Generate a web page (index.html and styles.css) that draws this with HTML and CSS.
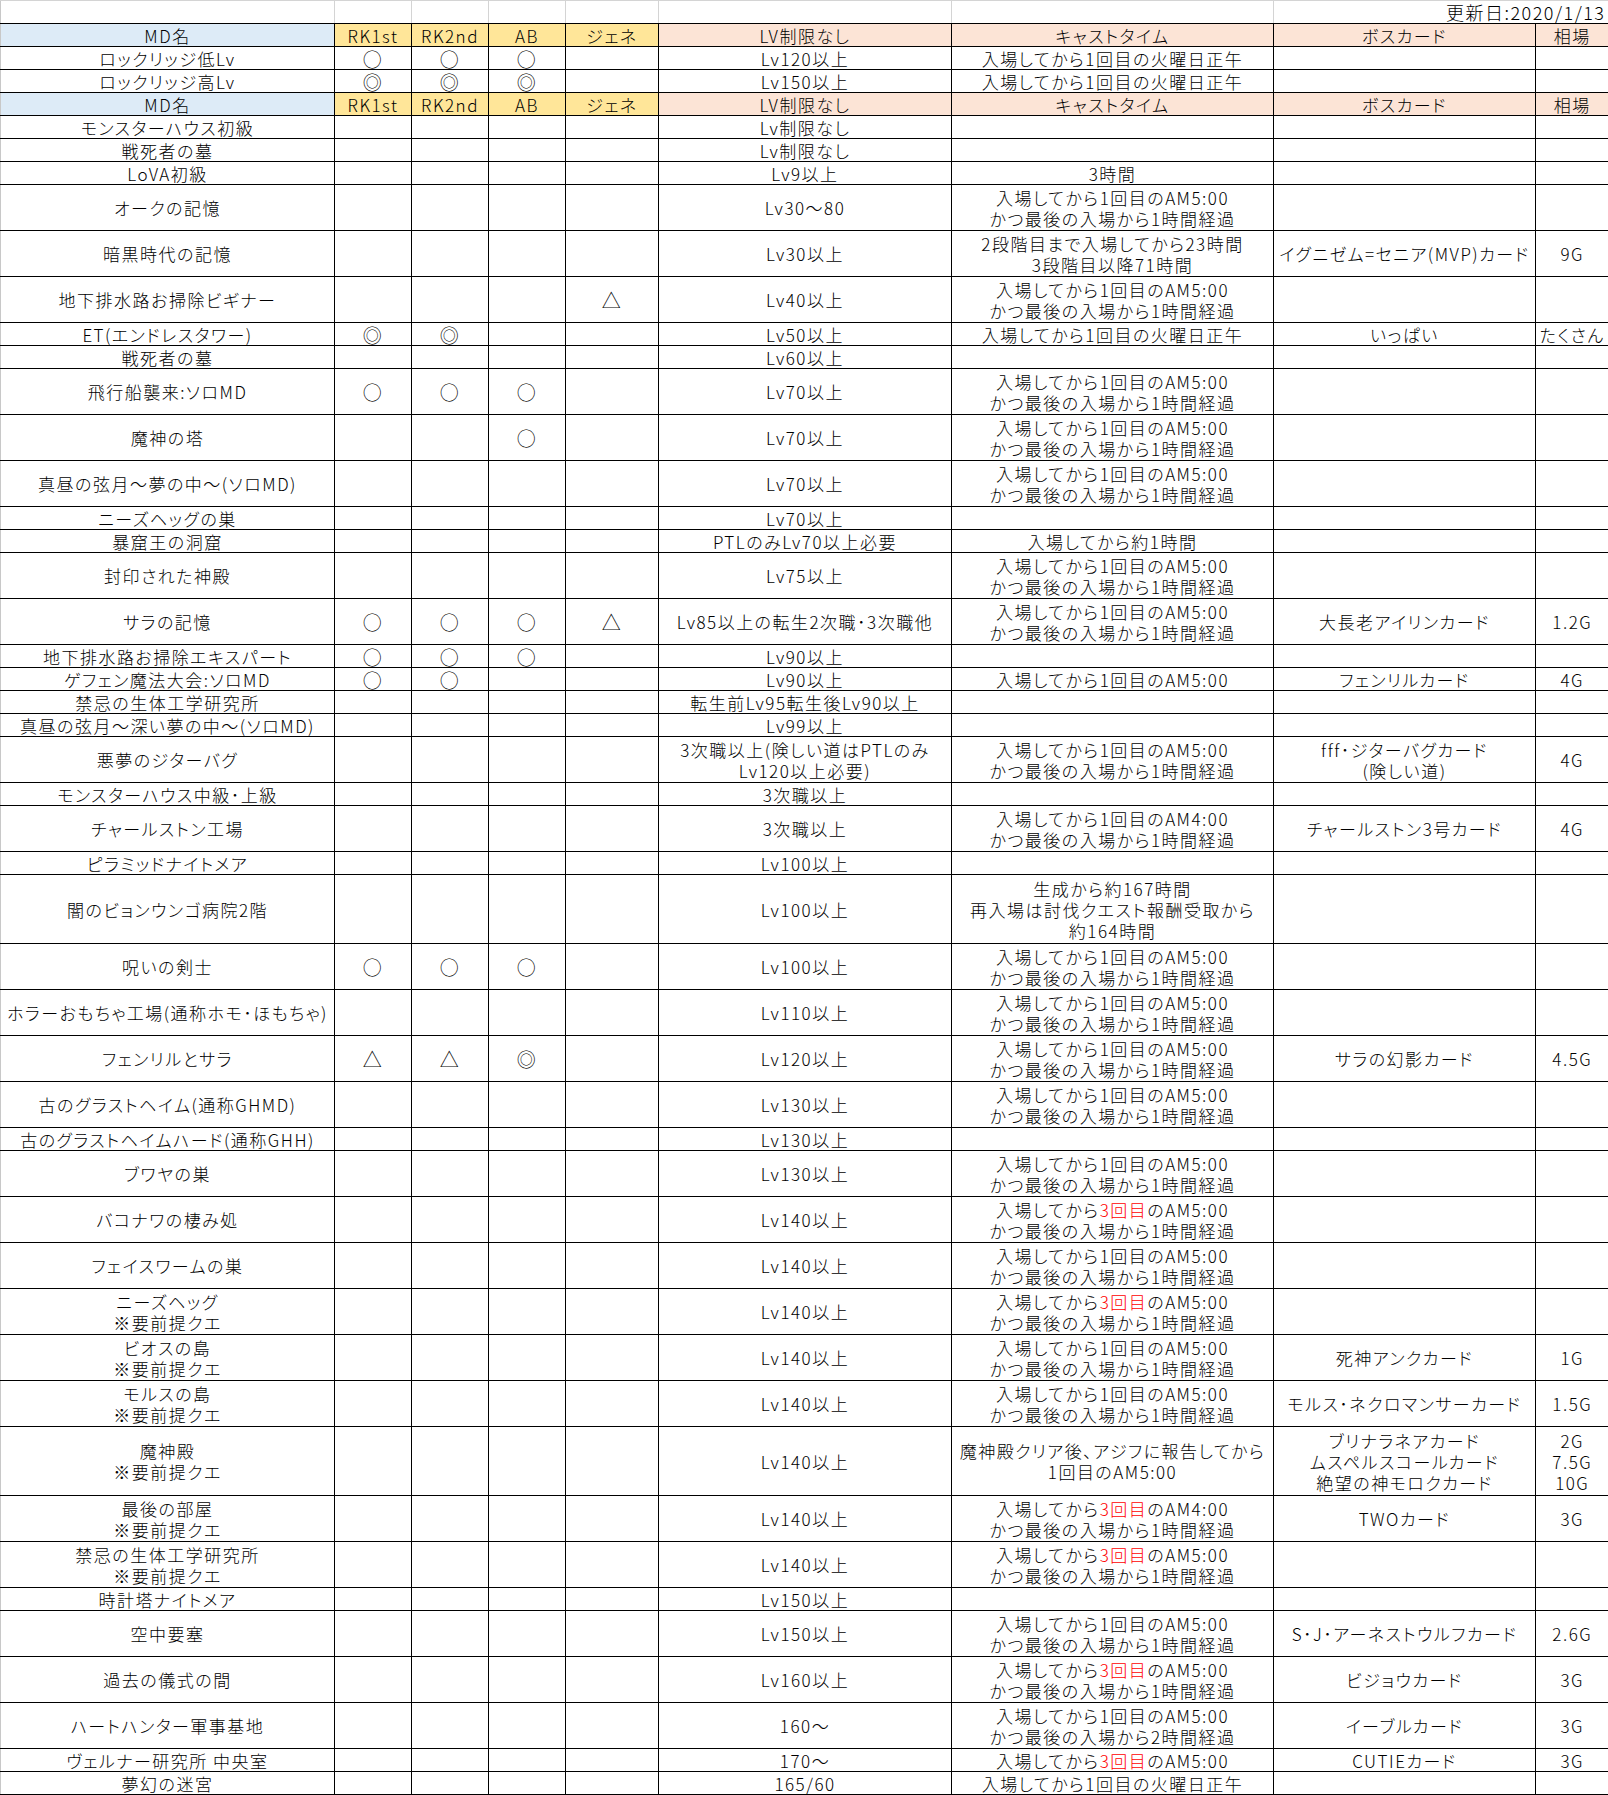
FILE: index.html
```html
<!DOCTYPE html>
<html lang="ja">
<head>
<meta charset="utf-8">
<title>MD一覧</title>
<link rel="stylesheet" href="styles.css">
</head>
<body>
<table class="sheet">
<colgroup>
<col class="c-name"><col class="c-mk"><col class="c-mk"><col class="c-mk"><col class="c-gene"><col class="c-lv"><col class="c-cast"><col class="c-boss"><col class="c-price">
</colgroup>
<tbody>
<tr class="r1 top"><td></td><td></td><td></td><td></td><td></td><td></td><td></td><td colspan="2" class="date">更新日:2020/1/13</td></tr>
<tr class="r1 head"><td class="hb">MD名</td><td class="hy">RK1st</td><td class="hy">RK2nd</td><td class="hy">AB</td><td class="hy">ジェネ</td><td class="hp">LV制限なし</td><td class="hp">キャストタイム</td><td class="hp">ボスカード</td><td class="hp">相場</td></tr>
<tr class="r1"><td>ロックリッジ低Lv</td><td class="mk">○</td><td class="mk">○</td><td class="mk">○</td><td></td><td>Lv120以上</td><td>入場してから1回目の火曜日正午</td><td></td><td></td></tr>
<tr class="r1"><td>ロックリッジ高Lv</td><td class="mk">◎</td><td class="mk">◎</td><td class="mk">◎</td><td></td><td>Lv150以上</td><td>入場してから1回目の火曜日正午</td><td></td><td></td></tr>
<tr class="r1 head"><td class="hb">MD名</td><td class="hy">RK1st</td><td class="hy">RK2nd</td><td class="hy">AB</td><td class="hy">ジェネ</td><td class="hp">LV制限なし</td><td class="hp">キャストタイム</td><td class="hp">ボスカード</td><td class="hp">相場</td></tr>
<tr class="r1"><td>モンスターハウス初級</td><td></td><td></td><td></td><td></td><td>Lv制限なし</td><td></td><td></td><td></td></tr>
<tr class="r1"><td>戦死者の墓</td><td></td><td></td><td></td><td></td><td>Lv制限なし</td><td></td><td></td><td></td></tr>
<tr class="r1"><td>LoVA初級</td><td></td><td></td><td></td><td></td><td>Lv9以上</td><td>3時間</td><td></td><td></td></tr>
<tr class="r2"><td>オークの記憶</td><td></td><td></td><td></td><td></td><td>Lv30～80</td><td>入場してから1回目のAM5:00<br>かつ最後の入場から1時間経過</td><td></td><td></td></tr>
<tr class="r2"><td>暗黒時代の記憶</td><td></td><td></td><td></td><td></td><td>Lv30以上</td><td>2段階目まで入場してから23時間<br>3段階目以降71時間</td><td>イグニゼム=セニア(MVP)カード</td><td>9G</td></tr>
<tr class="r2"><td>地下排水路お掃除ビギナー</td><td></td><td></td><td></td><td class="mk">△</td><td>Lv40以上</td><td>入場してから1回目のAM5:00<br>かつ最後の入場から1時間経過</td><td></td><td></td></tr>
<tr class="r1"><td>ET(エンドレスタワー)</td><td class="mk">◎</td><td class="mk">◎</td><td></td><td></td><td>Lv50以上</td><td>入場してから1回目の火曜日正午</td><td>いっぱい</td><td class="tight">たくさん</td></tr>
<tr class="r1"><td>戦死者の墓</td><td></td><td></td><td></td><td></td><td>Lv60以上</td><td></td><td></td><td></td></tr>
<tr class="r2"><td>飛行船襲来:ソロMD</td><td class="mk">○</td><td class="mk">○</td><td class="mk">○</td><td></td><td>Lv70以上</td><td>入場してから1回目のAM5:00<br>かつ最後の入場から1時間経過</td><td></td><td></td></tr>
<tr class="r2"><td>魔神の塔</td><td></td><td></td><td class="mk">○</td><td></td><td>Lv70以上</td><td>入場してから1回目のAM5:00<br>かつ最後の入場から1時間経過</td><td></td><td></td></tr>
<tr class="r2"><td>真昼の弦月～夢の中～(ソロMD)</td><td></td><td></td><td></td><td></td><td>Lv70以上</td><td>入場してから1回目のAM5:00<br>かつ最後の入場から1時間経過</td><td></td><td></td></tr>
<tr class="r1"><td>ニーズヘッグの巣</td><td></td><td></td><td></td><td></td><td>Lv70以上</td><td></td><td></td><td></td></tr>
<tr class="r1"><td>暴窟王の洞窟</td><td></td><td></td><td></td><td></td><td>PTLのみLv70以上必要</td><td>入場してから約1時間</td><td></td><td></td></tr>
<tr class="r2"><td>封印された神殿</td><td></td><td></td><td></td><td></td><td>Lv75以上</td><td>入場してから1回目のAM5:00<br>かつ最後の入場から1時間経過</td><td></td><td></td></tr>
<tr class="r2"><td>サラの記憶</td><td class="mk">○</td><td class="mk">○</td><td class="mk">○</td><td class="mk">△</td><td>Lv85以上の転生2次職･3次職他</td><td>入場してから1回目のAM5:00<br>かつ最後の入場から1時間経過</td><td>大長老アイリンカード</td><td>1.2G</td></tr>
<tr class="r1"><td>地下排水路お掃除エキスパート</td><td class="mk">○</td><td class="mk">○</td><td class="mk">○</td><td></td><td>Lv90以上</td><td></td><td></td><td></td></tr>
<tr class="r1"><td>ゲフェン魔法大会:ソロMD</td><td class="mk">○</td><td class="mk">○</td><td></td><td></td><td>Lv90以上</td><td>入場してから1回目のAM5:00</td><td>フェンリルカード</td><td>4G</td></tr>
<tr class="r1"><td>禁忌の生体工学研究所</td><td></td><td></td><td></td><td></td><td>転生前Lv95転生後Lv90以上</td><td></td><td></td><td></td></tr>
<tr class="r1"><td>真昼の弦月～深い夢の中～(ソロMD)</td><td></td><td></td><td></td><td></td><td>Lv99以上</td><td></td><td></td><td></td></tr>
<tr class="r2"><td>悪夢のジターバグ</td><td></td><td></td><td></td><td></td><td>3次職以上(険しい道はPTLのみ<br>Lv120以上必要)</td><td>入場してから1回目のAM5:00<br>かつ最後の入場から1時間経過</td><td>fff･ジターバグカード<br>(険しい道)</td><td>4G</td></tr>
<tr class="r1"><td>モンスターハウス中級･上級</td><td></td><td></td><td></td><td></td><td>3次職以上</td><td></td><td></td><td></td></tr>
<tr class="r2"><td>チャールストン工場</td><td></td><td></td><td></td><td></td><td>3次職以上</td><td>入場してから1回目のAM4:00<br>かつ最後の入場から1時間経過</td><td>チャールストン3号カード</td><td>4G</td></tr>
<tr class="r1"><td>ピラミッドナイトメア</td><td></td><td></td><td></td><td></td><td>Lv100以上</td><td></td><td></td><td></td></tr>
<tr class="r3"><td>闇のビョンウンゴ病院2階</td><td></td><td></td><td></td><td></td><td>Lv100以上</td><td>生成から約167時間<br>再入場は討伐クエスト報酬受取から<br>約164時間</td><td></td><td></td></tr>
<tr class="r2"><td>呪いの剣士</td><td class="mk">○</td><td class="mk">○</td><td class="mk">○</td><td></td><td>Lv100以上</td><td>入場してから1回目のAM5:00<br>かつ最後の入場から1時間経過</td><td></td><td></td></tr>
<tr class="r2"><td>ホラーおもちゃ工場(通称ホモ･ほもちゃ)</td><td></td><td></td><td></td><td></td><td>Lv110以上</td><td>入場してから1回目のAM5:00<br>かつ最後の入場から1時間経過</td><td></td><td></td></tr>
<tr class="r2"><td>フェンリルとサラ</td><td class="mk">△</td><td class="mk">△</td><td class="mk">◎</td><td></td><td>Lv120以上</td><td>入場してから1回目のAM5:00<br>かつ最後の入場から1時間経過</td><td>サラの幻影カード</td><td>4.5G</td></tr>
<tr class="r2"><td>古のグラストヘイム(通称GHMD)</td><td></td><td></td><td></td><td></td><td>Lv130以上</td><td>入場してから1回目のAM5:00<br>かつ最後の入場から1時間経過</td><td></td><td></td></tr>
<tr class="r1"><td>古のグラストヘイムハード(通称GHH)</td><td></td><td></td><td></td><td></td><td>Lv130以上</td><td></td><td></td><td></td></tr>
<tr class="r2"><td>ブワヤの巣</td><td></td><td></td><td></td><td></td><td>Lv130以上</td><td>入場してから1回目のAM5:00<br>かつ最後の入場から1時間経過</td><td></td><td></td></tr>
<tr class="r2"><td>バコナワの棲み処</td><td></td><td></td><td></td><td></td><td>Lv140以上</td><td>入場してから<span class="red">3回目</span>のAM5:00<br>かつ最後の入場から1時間経過</td><td></td><td></td></tr>
<tr class="r2"><td>フェイスワームの巣</td><td></td><td></td><td></td><td></td><td>Lv140以上</td><td>入場してから1回目のAM5:00<br>かつ最後の入場から1時間経過</td><td></td><td></td></tr>
<tr class="r2"><td>ニーズヘッグ<br>※要前提クエ</td><td></td><td></td><td></td><td></td><td>Lv140以上</td><td>入場してから<span class="red">3回目</span>のAM5:00<br>かつ最後の入場から1時間経過</td><td></td><td></td></tr>
<tr class="r2"><td>ビオスの島<br>※要前提クエ</td><td></td><td></td><td></td><td></td><td>Lv140以上</td><td>入場してから1回目のAM5:00<br>かつ最後の入場から1時間経過</td><td>死神アンクカード</td><td>1G</td></tr>
<tr class="r2"><td>モルスの島<br>※要前提クエ</td><td></td><td></td><td></td><td></td><td>Lv140以上</td><td>入場してから1回目のAM5:00<br>かつ最後の入場から1時間経過</td><td>モルス･ネクロマンサーカード</td><td>1.5G</td></tr>
<tr class="r3"><td>魔神殿<br>※要前提クエ</td><td></td><td></td><td></td><td></td><td>Lv140以上</td><td>魔神殿クリア後、アジフに報告してから<br>1回目のAM5:00</td><td>ブリナラネアカード<br>ムスペルスコールカード<br>絶望の神モロクカード</td><td>2G<br>7.5G<br>10G</td></tr>
<tr class="r2"><td>最後の部屋<br>※要前提クエ</td><td></td><td></td><td></td><td></td><td>Lv140以上</td><td>入場してから<span class="red">3回目</span>のAM4:00<br>かつ最後の入場から1時間経過</td><td>TWOカード</td><td>3G</td></tr>
<tr class="r2"><td>禁忌の生体工学研究所<br>※要前提クエ</td><td></td><td></td><td></td><td></td><td>Lv140以上</td><td>入場してから<span class="red">3回目</span>のAM5:00<br>かつ最後の入場から1時間経過</td><td></td><td></td></tr>
<tr class="r1"><td>時計塔ナイトメア</td><td></td><td></td><td></td><td></td><td>Lv150以上</td><td></td><td></td><td></td></tr>
<tr class="r2"><td>空中要塞</td><td></td><td></td><td></td><td></td><td>Lv150以上</td><td>入場してから1回目のAM5:00<br>かつ最後の入場から1時間経過</td><td>S･J･アーネストウルフカード</td><td>2.6G</td></tr>
<tr class="r2"><td>過去の儀式の間</td><td></td><td></td><td></td><td></td><td>Lv160以上</td><td>入場してから<span class="red">3回目</span>のAM5:00<br>かつ最後の入場から1時間経過</td><td>ビジョウカード</td><td>3G</td></tr>
<tr class="r2"><td>ハートハンター軍事基地</td><td></td><td></td><td></td><td></td><td>160～</td><td>入場してから1回目のAM5:00<br>かつ最後の入場から2時間経過</td><td>イーブルカード</td><td>3G</td></tr>
<tr class="r1"><td>ヴェルナー研究所 中央室</td><td></td><td></td><td></td><td></td><td>170～</td><td>入場してから<span class="red">3回目</span>のAM5:00</td><td>CUTIEカード</td><td>3G</td></tr>
<tr class="r1"><td>夢幻の迷宮</td><td></td><td></td><td></td><td></td><td>165/60</td><td>入場してから1回目の火曜日正午</td><td></td><td></td></tr>
</tbody>
</table>
</body>
</html>
```
FILE: styles.css
```css
html, body {
  margin: 0;
  padding: 0;
  background: #ffffff;
}
body {
  font-family: "Noto Sans CJK JP", "Noto Sans", sans-serif;
  font-size: 17px;
  font-weight: 300;
  color: #000000;
}
.sheet {
  border-collapse: collapse;
  table-layout: fixed;
  width: 1608px;
}
.c-name { width: 334px; }
.c-mk { width: 77px; }
.c-gene { width: 93px; }
.c-lv { width: 293px; }
.c-cast { width: 322px; }
.c-boss { width: 262px; }
.c-price { width: 73px; }

.sheet td {
  border: 1px solid #000000;
  padding: 0 1px;
  text-align: center;
  vertical-align: middle;
  line-height: 21px;
  white-space: nowrap;
  letter-spacing: 1.5px;
  font-feature-settings: "palt" 1;
}
.sheet td:first-child {
  border-left-color: #c8c8c8;
}
.sheet td:last-child {
  border-right: none;
}
.r1 { height: 23px; }
.r2 { height: 46px; }
.r3 { height: 69px; }

.top td {
  border-color: #d4d4d4;
  border-bottom-color: #000000;
}
.top td.date {
  text-align: right;
  padding-right: 3px;
  letter-spacing: 1.5px;
  font-size: 18px;
}
.hb { background: #ddebf7; }
.hy { background: #ffe699; }
.hp { background: #fce4d6; }
.mk {
  font-size: 19px;
  letter-spacing: 0;
}
.tight {
  letter-spacing: 0.5px;
}
.red { color: #ff0000; }
```
